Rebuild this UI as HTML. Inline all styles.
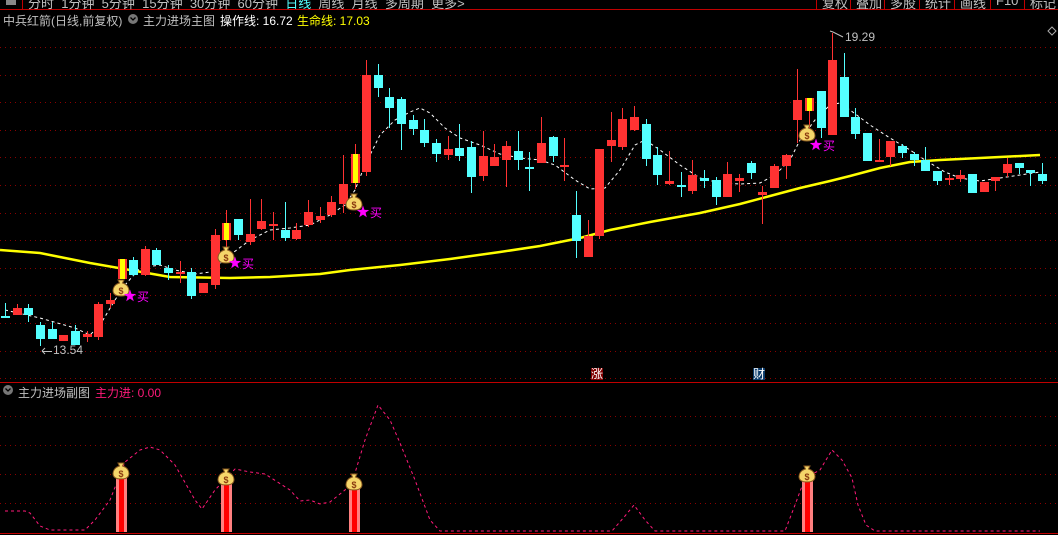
<!DOCTYPE html>
<html><head><meta charset="utf-8">
<style>
html,body{margin:0;padding:0;background:#000;width:1058px;height:535px;overflow:hidden}
body{font-family:"Liberation Sans","Noto Sans CJK SC",sans-serif;font-size:12px;color:#c0c0c0;position:relative}
.t{position:absolute;white-space:nowrap}
</style></head><body>
<svg id="s" width="1058" height="535" style="position:absolute;left:0;top:0"></svg>
<div class="t" style="left:28px;top:-7px;color:#c0c0c0;font-size:13px">分时&nbsp;&nbsp;1分钟&nbsp;&nbsp;5分钟&nbsp;&nbsp;15分钟&nbsp;&nbsp;30分钟&nbsp;&nbsp;60分钟&nbsp;&nbsp;<span style="color:#54ffff">日线</span>&nbsp;&nbsp;周线&nbsp;&nbsp;月线&nbsp;&nbsp;多周期&nbsp;&nbsp;更多&gt;</div>
<div class="t" style="left:822px;top:-7px;font-size:13px;color:#c0c0c0;word-spacing:0">复权</div>
<div class="t" style="left:856px;top:-7px;font-size:13px">叠加</div>
<div class="t" style="left:890px;top:-7px;font-size:13px">多股</div>
<div class="t" style="left:925px;top:-7px;font-size:13px">统计</div>
<div class="t" style="left:960px;top:-7px;font-size:13px">画线</div>
<div class="t" style="left:996px;top:-7px;font-size:13px">F10</div>
<div class="t" style="left:1030px;top:-7px;font-size:13px">标记</div>
<div class="t" style="left:3px;top:12px">中兵红箭(日线,前复权)</div>
<div class="t" style="left:143px;top:12px">主力进场主图</div>
<div class="t" style="left:220px;top:12px;color:#fff">操作线: 16.72</div>
<div class="t" style="left:297px;top:12px;color:#ffff00">生命线: 17.03</div>
<div class="t" style="left:53px;top:343px;color:#c0c0c0">13.54</div>
<div class="t" style="left:845px;top:30px;color:#c0c0c0">19.29</div>
<div class="t" style="left:591px;top:368px;background:#800000;color:#fff;line-height:12px">涨</div>
<div class="t" style="left:753px;top:368px;background:#0a3a6a;color:#fff;line-height:12px">财</div>
<div class="t" style="left:18px;top:384px">主力进场副图</div>
<div class="t" style="left:95px;top:384px;color:#ff1a7a">主力进: 0.00</div>
<script>
var s=document.getElementById('s'),h='';
function L(x1,y1,x2,y2,c,w,d){h+='<line x1="'+x1+'" y1="'+y1+'" x2="'+x2+'" y2="'+y2+'" stroke="'+c+'" stroke-width="'+(w||1)+'"'+(d?' stroke-dasharray="'+d+'"':'')+'/>';}
function R(x,y,w,hh,c,st){h+='<rect x="'+x+'" y="'+y+'" width="'+w+'" height="'+hh+'" fill="'+c+'"'+(st?' stroke="'+st+'"':'')+'/>';}
// frame lines
L(0,9.5,1058,9.5,'#c00000');L(22.5,0,22.5,9,'#c00000');R(6,0,10,5,'#888');
[816,850,884,919,954,990,1024].forEach(function(x){L(x+.5,0,x+.5,9,'#c00000')});
L(0,382.5,1058,382.5,'#c00000');L(0,533.5,1058,533.5,'#c00000');
// grid
for(var y=47;y<380;y+=27.6)L(0,Math.round(y)+.5,1058,Math.round(y)+.5,'#8a0000',1,'1 4');
[416,445,474,503].forEach(function(y){L(0,y+.5,1058,y+.5,'#8a0000',1,'1 4')});
// circle icons
h+='<circle cx="133" cy="19" r="5" fill="#777"/><path d="M130.5 17.5l2.5 2.5 2.5-2.5" stroke="#000" fill="none" stroke-width="1.3"/>';
h+='<circle cx="8" cy="390" r="5" fill="#777"/><path d="M5.5 388.5l2.5 2.5 2.5-2.5" stroke="#000" fill="none" stroke-width="1.3"/>';
h+='<path d="M1052 27l4 4-4 4-4-4z" stroke="#aaa" fill="none"/>';
// yellow line
var yl=[[0,250],[40,253],[90,263],[130,270],[170,277],[230,278],[270,277],[320,274],[350,270],[400,265],[450,259],[500,252],[540,246],[580,238],[610,230],[650,222],[700,213],[740,204],[770,196],[800,188],[830,181],[850,176],[880,168],[910,162],[940,160],[1000,157],[1040,155]];
h+='<polyline fill="none" stroke="#ffff00" stroke-width="2.5" points="'+yl.map(function(p){return p.join(',')}).join(' ')+'"/>';
// white dashed
var wl=[[5,310],[40,318],[75,328],[90,335],[100,325],[115,300],[125,285],[140,268],[160,265],[175,270],[195,274],[210,272],[230,255],[250,240],[270,230],[290,228],[310,225],[330,215],[345,205],[355,190],[365,165],[380,135],[395,120],[410,112],[420,108],[430,113],[445,128],[460,138],[480,145],[500,154],[520,158],[540,160],[555,165],[575,180],[590,189],[605,188],[620,170],[635,145],[645,140],[660,150],[680,165],[700,178],[720,183],[740,184],[760,183],[775,175],[790,160],[800,140],[815,120],[830,105],[840,103],[850,110],[870,125],[890,138],[910,150],[925,160],[945,172],[960,178],[980,181],[1000,178],[1020,175],[1040,172]];
h+='<polyline fill="none" stroke="#fff" stroke-width="1" stroke-dasharray="3 3" points="'+wl.map(function(p){return p.join(',')}).join(' ')+'"/>';
// candles: color, top, bot, hi, lo
var C=[['c',316,318,303,318],['r',308,315,304,315],['c',308,315,304,322],['c',325,339,322,346],['c',329,339,322,339],['r',335,341,335,341],['c',331,345,325,345],['r',334,337,331,342],['r',304,337,302,340],['r',300,304,293,308],
['y',259,279,259,279],['c',260,275,257,276],['r',249,275,246,276],['c',250,265,248,265],['c',268,273,265,280],['r',272,274,261,283],['c',272,296,268,299],['r',283,293,283,293],['r',235,285,229,289],['y',223,240,210,248],
['c',219,235,219,240],['r',234,242,199,245],['r',221,229,199,230],['r',224,226,212,240],['c',230,238,202,241],['r',230,239,223,240],['r',212,225,200,227],['r',216,220,207,223],['r',202,215,196,217],['r',184,204,155,213],
['y',154,183,144,189],['r',75,172,60,176],['c',75,88,64,97],['c',97,108,88,128],['c',99,124,97,150],['c',120,129,115,135],['c',130,143,119,147],['c',143,154,139,162],['r',149,155,136,160],['c',148,156,124,161],
['c',147,177,141,193],['r',156,176,131,181],['r',157,166,144,166],['r',146,160,141,187],['c',151,160,131,170],['c',167,169,152,191],['r',143,163,117,163],['c',137,156,136,162],['r',165,167,138,181],['c',215,241,191,258],
['r',236,257,220,257],['r',149,236,149,239],['r',140,146,112,162],['r',119,147,108,150],['r',117,130,106,131],['c',124,159,119,166],['c',155,175,147,185],['r',181,184,151,185],['c',185,187,172,197],['r',175,191,160,194],
['c',178,181,170,188],['c',180,197,177,205],['r',174,197,162,197],['r',178,181,174,192],['c',163,173,161,179],['r',192,195,186,224],['r',166,188,164,188],['r',155,166,154,179],['r',100,120,69,143],['y',98,111,98,128],
['c',91,128,91,138],['r',60,135,33,135],['c',77,117,53,117],['c',117,134,108,139],['c',133,161,133,161],['r',160,162,139,162],['r',141,157,141,166],['c',146,153,144,158],['c',154,160,152,166],['c',160,171,147,171],
['c',171,181,171,185],['r',178,180,175,185],['r',175,179,170,182],['c',174,193,174,193],['r',182,192,182,192],['r',177,181,177,191],['r',164,173,158,177],['c',163,168,163,174],['c',170,173,170,186],['c',174,181,163,184]];
C.forEach(function(k,i){var x=Math.round(5+11.65*i),col=k[0]=='c'?'#54ffff':'#ff3232';
 L(x+.5,k[3],x+.5,k[4],col);
 var hh=Math.max(k[2]-k[1],2);
 if(k[0]=='y'){R(x-4,k[1],9,hh,'#ff3232');R(x-2,k[1],5,hh,'#ffff00');}
 else R(x-4,k[1],9,hh,col);
});
// money bag
function bag(x,y){h+='<g transform="translate('+x+','+y+')"><path d="M-3-8h6l-1.5 3c5 1.5 6.5 5 6.5 7.5 0 4-3.5 5.5-8 5.5s-8-1.5-8-5.5c0-2.5 1.5-6 6.5-7.5z" fill="#f5d66a" stroke="#8a5a20" stroke-width="1"/><text x="0" y="6" text-anchor="middle" font-size="9" font-weight="bold" fill="#8a3a10" font-family="Liberation Sans">$</text></g>';}
function star(x,y){var p=[];for(var i=0;i<10;i++){var r=i%2?2.6:6.5,a=-Math.PI/2+i*Math.PI/5;p.push((x+r*Math.cos(a)).toFixed(1)+','+(y+r*Math.sin(a)).toFixed(1));}h+='<polygon points="'+p.join(' ')+'" fill="#ff00ff"/>';}
function buy(bx,by,sx,sy){bag(bx,by);star(sx,sy);h+='<text x="'+(sx+7)+'" y="'+(sy+5)+'" fill="#ff00ff" font-size="12" font-family="Noto Sans CJK SC,sans-serif">买</text>';}
buy(121,288,130,296);buy(226,255,235,263);buy(354,202,363,212);buy(807,133,816,145);
// arrows for labels
L(42,351.5,52,351.5,'#c0c0c0');L(42,351,45,348,'#c0c0c0');L(42,351,45,354,'#c0c0c0');
h+='<path d="M830 31 L833 32 L843 37" stroke="#c0c0c0" fill="none"/>';
// sub pink line
var pl=[[5,511],[25,511],[30,513],[40,526],[50,530],[85,530],[95,520],[110,500],[125,462],[140,450],[150,447],[160,450],[175,465],[195,500],[202,509],[215,490],[235,469],[250,472],[265,474],[290,490],[300,501],[310,500],[320,504],[330,502],[345,490],[355,473],[365,440],[378,405],[390,420],[400,443],[415,480],[430,520],[440,531],[612,531],[625,516],[634,505],[645,520],[655,531],[785,531],[795,505],[805,478],[820,470],[832,450],[842,460],[852,478],[858,505],[866,525],[875,531],[1040,531]];
h+='<polyline fill="none" stroke="#ff1a7a" stroke-width="1" stroke-dasharray="3 3" points="'+pl.map(function(p){return p.join(',')}).join(' ')+'"/>';
[[121,478],[226,484],[354,489],[807,481]].forEach(function(b){R(b[0]-5,b[1],11,532-b[1],'#ff8080');R(b[0]-2,b[1],5,532-b[1],'#ff0000');bag(b[0],b[1]-7);});
s.innerHTML=h;
</script>
</body></html>
